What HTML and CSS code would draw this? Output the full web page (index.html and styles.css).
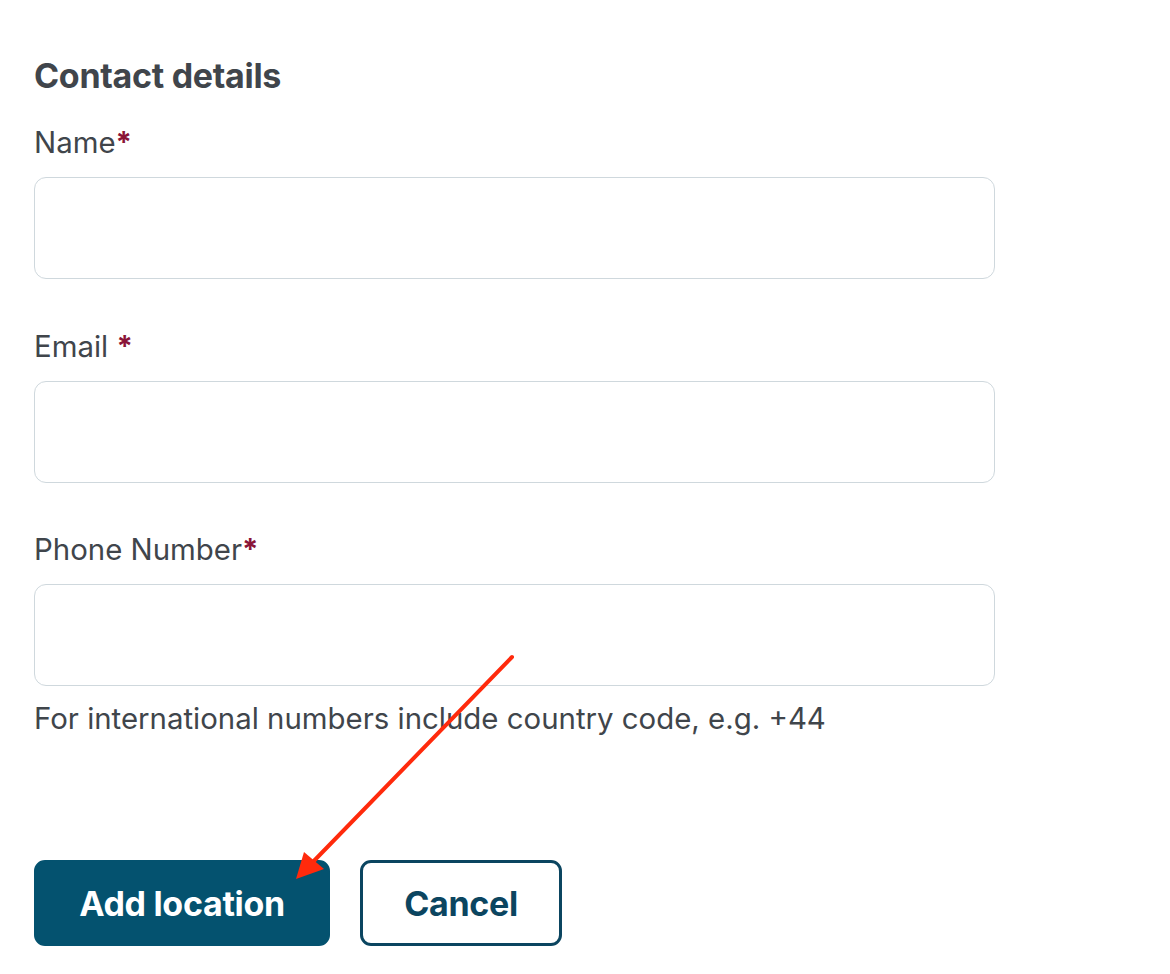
FILE: index.html
```html
<!DOCTYPE html>
<html lang="en">

<head>
  <meta charset="UTF-8">
  <meta name="viewport" content="width=device-width, initial-scale=1.0">
  <link rel="stylesheet" href="styles.css">
  <title>Add location</title>
</head>

<body>

  <form class="contact-form">
    <h2 class="section-title">Contact details</h2>

    <div class="field">
      <label class="field-label" for="name">Name<span class="required">*</span></label>
      <input class="field-input" type="text" id="name">
    </div>

    <div class="field">
      <label class="field-label" for="email">Email <span class="required">*</span></label>
      <input class="field-input" type="email" id="email">
    </div>

    <div class="field field-last">
      <label class="field-label" for="phone">Phone Number<span class="required">*</span></label>
      <input class="field-input" type="tel" id="phone">
      <p class="field-hint">For international numbers include country code, e.g. +44</p>
    </div>

    <div class="actions">
      <button type="button" class="btn btn-primary">Add location</button>
      <button type="button" class="btn btn-secondary">Cancel</button>
    </div>
  </form>

  <!-- annotation arrow -->
  <svg class="annotation" width="1170" height="974" viewBox="0 0 1170 974">
    <line x1="512" y1="657" x2="309" y2="866" stroke="#ff2a0c" stroke-width="4" stroke-linecap="round" />
    <polygon points="296,879 304,852 324,869" fill="#ff2a0c" />
  </svg>

</body>

</html>
```

FILE: styles.css
```css
body {
  font-family: Inter, "Noto Sans", sans-serif;
  color: #40454b;
  margin: 0;
  background: #fff;
}

.contact-form {
  width: 961px;
  padding: 56px 0 0 34px;
}

.section-title {
  font-size: 34px;
  line-height: 40px;
  font-weight: 700;
  margin: 0 0 29px;
  letter-spacing: -0.3px;
}

.field {
  display: flex;
  flex-direction: column;
  margin-bottom: 49.5px;
}

.field-last {
  margin-bottom: 0;
}

.field-label {
  font-size: 29.4px;
  line-height: 36px;
  margin-bottom: 16px;
}

.required {
  color: #8a1538;
  font-weight: 700;
}

.field-input {
  box-sizing: border-box;
  height: 102px;
  width: 100%;
  border: 1px solid #cfd8dd;
  border-radius: 12px;
  background: #fff;
}

.field-hint {
  font-size: 29.4px;
  line-height: 36px;
  margin: 15px 0 0;
}

.actions {
  display: flex;
  gap: 30px;
  margin-top: 123px;
}

.btn {
  box-sizing: border-box;
  height: 86px;
  padding: 0 40px;
  border-radius: 11px;
  border: 3px solid #04526f;
  font-family: Inter, "Noto Sans", sans-serif;
  font-size: 34px;
  font-weight: 700;
  letter-spacing: -0.3px;
  cursor: pointer;
}

.btn-primary {
  background-color: #04526f;
  color: #fff;
  width: 296px;
}

.btn-secondary {
  background-color: #fff;
  color: #0b4560;
  border-color: #0b4560;
  width: 202px;
}

.annotation {
  position: absolute;
  left: 0;
  top: 0;
  pointer-events: none;
}
```
